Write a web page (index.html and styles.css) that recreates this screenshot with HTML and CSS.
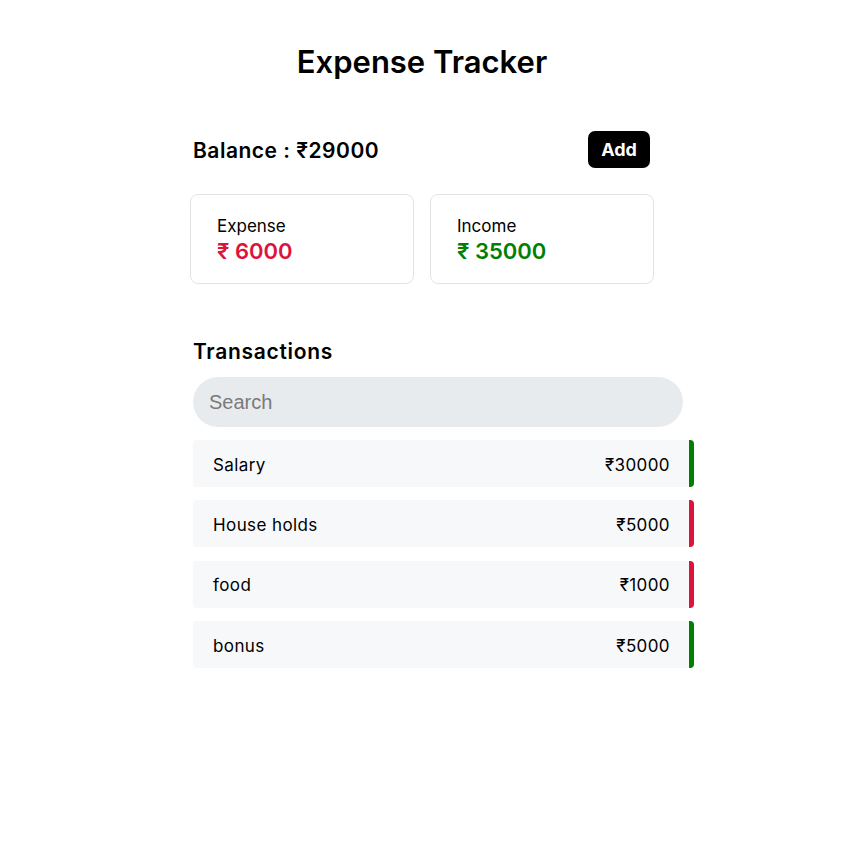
FILE: index.html
```html
<!DOCTYPE html>
<html>
<head>
<meta charset="utf-8">
<link rel="stylesheet" href="styles.css">
</head>
<body>
<div class="app">
  <h1 class="title">Expense Tracker</h1>
  <div class="balance-row">
    <h2 class="balance">Balance : ₹29000</h2>
    <button class="add-btn">Add</button>
  </div>
  <div class="cards">
    <div class="card">
      <div class="card-label">Expense</div>
      <div class="card-value expense">₹ 6000</div>
    </div>
    <div class="card">
      <div class="card-label">Income</div>
      <div class="card-value income">₹ 35000</div>
    </div>
  </div>
  <h2 class="section-title">Transactions</h2>
  <input class="search" type="text" placeholder="Search">
  <div class="list">
    <div class="item credit"><span>Salary</span><span>₹30000</span></div>
    <div class="item debit"><span>House holds</span><span>₹5000</span></div>
    <div class="item debit"><span>food</span><span>₹1000</span></div>
    <div class="item credit"><span>bonus</span><span>₹5000</span></div>
  </div>
</div>
</body>
</html>
```
FILE: styles.css
```css
* { box-sizing: border-box; }
body {
  margin: 0;
  font-family: "Inter", "Noto Sans", sans-serif;
  color: #000;
  background: #fff;
}
.app {
  width: 464px;
  margin-left: 190px;
  padding-top: 40px;
}
.title {
  margin: 0;
  text-align: center;
  font-size: 31px;
  font-weight: 600;
  line-height: 44px;
}
.balance-row {
  display: flex;
  justify-content: space-between;
  align-items: center;
  margin-top: 47px;
  padding: 0 4px 0 3px;
}
.balance {
  margin: 0;
  font-size: 21px;
  font-weight: 600;
  letter-spacing: 0.5px;
  line-height: 28px;
  padding-top: 2px;
}
.add-btn {
  width: 62px;
  height: 37px;
  border: none;
  border-radius: 7px;
  background: #000;
  color: #fff;
  font-family: inherit;
  font-size: 18px;
  font-weight: 700;
}
.cards {
  display: flex;
  gap: 16px;
  margin-top: 26px;
}
.card {
  width: 224px;
  height: 90px;
  border: 1px solid #e3e3e3;
  border-radius: 8px;
  padding: 20px 26px;
}
.card-label {
  font-size: 17px;
  line-height: 22px;
}
.card-value {
  font-size: 22px;
  font-weight: 600;
  line-height: 28px;
}
.expense { color: #dc143c; }
.income { color: #008000; }
.section-title {
  margin: 53px 0 0 3px;
  font-size: 21px;
  font-weight: 600;
  letter-spacing: 0.7px;
  line-height: 30px;
}
.search {
  display: block;
  width: 490px;
  height: 50px;
  margin: 10px 0 0 3px;
  border: none;
  border-radius: 25px;
  background: #e8ebee;
  padding: 0 16px;
  font-family: "Liberation Sans", Arial, sans-serif;
  font-size: 20px;
  outline: none;
}
.search::placeholder { color: #7a7a7a; }
.list {
  display: flex;
  flex-direction: column;
  gap: 13.4px;
  margin: 13px 0 0 3px;
  width: 501px;
}
.item {
  display: flex;
  justify-content: space-between;
  align-items: center;
  height: 47px;
  padding: 2px 19px 0 20px;
  background: #f7f8fa;
  border-radius: 4px;
  border-right: 5px solid;
  font-size: 17px;
  letter-spacing: 0.4px;
}
.credit { border-right-color: #008000; }
.debit { border-right-color: #dc143c; }
```
